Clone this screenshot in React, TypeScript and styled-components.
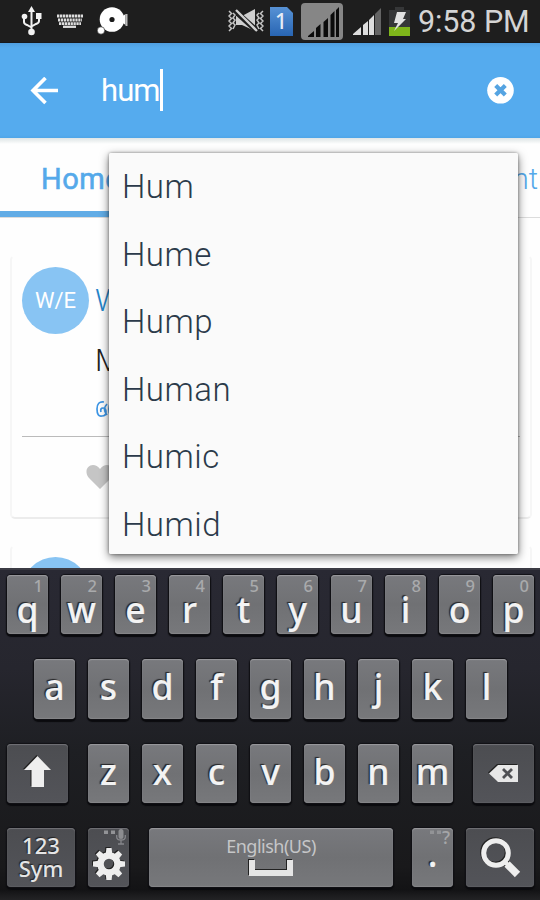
import React from "react";
import styled, { createGlobalStyle, css } from "styled-components";

const GlobalStyle = createGlobalStyle`
  * { box-sizing: border-box; }
  body { margin: 0; background: #fff; overflow: hidden; }
`;

const Screen = styled.div`
  position: relative;
  width: 540px;
  height: 900px;
  overflow: hidden;
  display: flex;
  flex-direction: column;
  background: #fefefe;
  font-family: Roboto, sans-serif;
`;

const StatusBar = styled.header`
  height: 43px;
  flex: none;
  display: flex;
  justify-content: space-between;
  padding: 0 11px 0 20px;
  background: #1e1e1e;
  border-bottom: 1px solid #17191c;
`;

const StatusGroup = styled.div<{ $gap: number }>`
  display: flex;
  align-items: center;
  gap: ${(p) => p.$gap}px;
  svg { flex: none; display: block; }
`;

const Clock = styled.time`
  width: 111px;
  padding-top: 1px;
  font-size: 30.5px;
  line-height: 42px;
  letter-spacing: -0.1px;
  white-space: nowrap;
  color: #d4d4d4;
`;

const SearchBar = styled.div`
  height: 95px;
  flex: none;
  display: flex;
  align-items: center;
  padding: 0 26px 0 30px;
  background: linear-gradient(#4f9fe0 0, #55abee 5px, #55abee 92px, #4fa5e7 95px);
  svg { display: block; flex: none; }
`;

const Query = styled.div`
  flex: 1;
  display: flex;
  align-items: center;
  margin-left: 42px;
  font-size: 31px;
  line-height: 44px;
  letter-spacing: -0.9px;
  color: #fff;
`;

const Caret = styled.span`
  width: 3.5px;
  height: 42px;
  margin-bottom: 1px;
  background: #fff;
`;

const Tabs = styled.nav`
  height: 80px;
  flex: none;
  display: flex;
  justify-content: space-between;
  background: linear-gradient(#dfe5e7 0, #edf1f1 3px, #fefefe 6px);
  border-bottom: 1px solid #dcdcdc;
`;

const Tab = styled.div<{ $active?: boolean }>`
  height: 79px;
  width: 180px;
  padding: 0 0 0 41px;
  font-size: 29px;
  line-height: 82px;
  color: #55a9ea;
  ${(p) =>
    p.$active
      ? css`font-weight: 400; letter-spacing: 0.5px; -webkit-text-stroke: 0.6px #55a9ea; border-bottom: 6px solid #61ace6;`
      : css`font-weight: 300; text-align: right; padding: 0 2px 0 0;`}
`;

const Feed = styled.main`
  height: 350px;
  flex: none;
  overflow: hidden;
  display: flex;
  flex-direction: column;
  gap: 26px;
  padding: 37px 8px 0 10px;
`;

const Card = styled.article`
  height: 264px;
  flex: none;
  padding: 10px 10px 0;
  border: 2px solid #f6f6f6;
  border-top-color: transparent;
  border-bottom-color: #ececec;
  border-radius: 5px;
  display: flex;
  flex-direction: column;
`;

const Entry = styled.div`
  height: 169px;
  flex: none;
  display: flex;
  gap: 7px;
`;

const Avatar = styled.div`
  width: 67px;
  height: 67px;
  flex: none;
  border-radius: 50%;
  background: #88c4f3;
  color: #fff;
  font-size: 22px;
  line-height: 67px;
  text-align: center;
`;

const Lines = styled.div`
  display: flex;
  flex-direction: column;
  font-size: 31px;
  font-weight: 300;
  line-height: 60px;
  padding-top: 4px;
  svg { display: block; margin-top: 9px; }
`;

const Term = styled.span`
  margin-left: -1px;
  color: #2484c9;
`;

const Meaning = styled.span`
  margin-left: -1px;
  color: #222;
`;

const Actions = styled.div`
  height: 80px;
  display: flex;
  align-items: center;
  padding-left: 64px;
  border-top: 1px solid #bbb;
`;

const Suggestions = styled.ul`
  position: absolute;
  left: 109px;
  top: 153px;
  width: 409px;
  height: 401px;
  margin: 0;
  padding: 0;
  list-style: none;
  overflow: hidden;
  border-radius: 2px;
  background: #fafafa;
`;

const SuggestionShadow = styled.div`
  position: absolute;
  left: 109px;
  top: 153px;
  width: 409px;
  height: 401px;
  border-radius: 2px;
  box-shadow: 0 0 3px rgba(0, 0, 0, 0.4), 0 3px 10px rgba(0, 0, 0, 0.55);
`;

const Suggestion = styled.li`
  height: 67.5px;
  padding-left: 13px;
  font-size: 33px;
  font-weight: 300;
  letter-spacing: 0.5px;
  line-height: 67.5px;
  color: #2b3a4a;
`;

const Keyboard = styled.section`
  position: relative;
  height: 332px;
  flex: none;
  display: flex;
  flex-direction: column;
  gap: 25px;
  padding-top: 5px;
  border-top: 2px solid #3b3b44;
  background: linear-gradient(#292933 0, #26262e 30%, #1e1f23 55%, #19191b 90%, #131315 97%, #232325 100%);
  font-family: "Noto Sans", sans-serif;
`;

const KeyRow = styled.div<{ $left: number }>`
  height: 59.25px;
  flex: none;
  display: flex;
  padding-left: ${(p) => p.$left}px;
`;

const Key = styled.div<{ $w?: number; $after?: number; $dark?: boolean }>`
  position: relative;
  width: ${(p) => p.$w ?? 41}px;
  height: 59.25px;
  flex: none;
  margin-right: ${(p) => p.$after ?? 13}px;
  display: flex;
  flex-direction: column;
  align-items: center;
  justify-content: center;
  border-radius: 4px;
  background: ${(p) => (p.$dark ? "linear-gradient(#4c4d51, #535459)" : "linear-gradient(#78797d, #707174 50%, #77787b)")};
  box-shadow: 0 0 1px 1px #111116, 0 2px 1px 1px #0b0b0e,
    inset 0 1px 1px ${(p) => (p.$dark ? "#737377" : "#9a9a9e")},
    inset 0 -1px 1px ${(p) => (p.$dark ? "#5d5e62" : "#858689")};
  color: #f3f3f3;
`;

const Letter = styled.span<{ $drop?: number }>`
  margin-top: ${(p) => p.$drop ?? 0}px;
  font-size: 35.5px;
  font-weight: 500;
  line-height: 24px;
  -webkit-text-stroke: 0.2px #f3f3f3;
  text-shadow: -1.5px -1px 1px #252527;
`;

const Hint = styled.span`
  position: absolute;
  right: 5px;
  top: 3px;
  font-size: 16.5px;
  line-height: 16px;
  font-weight: 500;
  color: #a9aaac;
`;

const Corner = styled.span`
  position: absolute;
  right: 3px;
  top: 1px;
  display: flex;
  font-size: 18px;
  line-height: 16px;
  font-weight: 500;
  color: #a5a6a8;
`;

const ModeLabel = styled.span`
  font-size: 22px;
  line-height: 23px;
  font-weight: 500;
  text-align: center;
  color: #e5e5e5;
  text-shadow: -1px -1px 1px #222;
`;

const Language = styled.span`
  margin-top: -5px;
  font-size: 18px;
  line-height: 27px;
  letter-spacing: -0.5px;
  color: #c5c6c8;
`;

const IconSlot = styled.span<{ $up?: number; $down?: number }>`
  display: block;
  padding: ${(p) => p.$down ?? 0}px 0 ${(p) => p.$up ?? 0}px;
`;

const Raised = styled.svg`
  display: block;
  flex: none;
  overflow: visible;
  filter: drop-shadow(-1px -1px 0.6px #222);
`;

const UsbIcon = () => (
  <svg width="23" height="30" viewBox="0 0 23 30" fill="none" stroke="#f2f2f2" strokeWidth="2">
    <path d="M11.5 5v21M4 11v5q0 2 3 3l4.500 2.500M19 11v4q0 2-3 3l-4.500 2.500" />
    <path d="M11.500 0l3.500 6H8z" fill="#f2f2f2" stroke="none" />
    <circle cx="4.500" cy="10.500" r="2.800" fill="#f2f2f2" stroke="none" />
    <path d="M16 7h5.500v6H16z" fill="#f2f2f2" stroke="none" />
    <circle cx="11.500" cy="26" r="3.300" fill="#f2f2f2" stroke="none" />
  </svg>
);

const KeyboardIcon = () => (
  <svg width="26" height="14" viewBox="0 0 26 14" fill="none" stroke="#dedede">
    <path d="M0 2h26" strokeWidth="3" strokeDasharray="2.4 .6" />
    <path d="M1 6h24" strokeWidth="3" strokeDasharray="2.2 .7" />
    <path d="M2 9.700h22" strokeWidth="2.700" strokeDasharray="2.300 .6" />
    <path d="M6 12.800h13" strokeWidth="2.300" />
  </svg>
);

const DiscIcon = () => (
  <svg width="33" height="28" viewBox="0 0 33 28" fill="#fff">
    <circle cx="15" cy="12.500" r="12.300" />
    <circle cx="15" cy="12.500" r="2.600" fill="#1b1b1b" />
    <circle cx="4" cy="23.500" r="3.700" stroke="#1e1e1e" strokeWidth=".6" />
    <path d="M26 9l2.500-2v11L26 16z" />
    <path d="M29.500 7v12" stroke="#bbb" strokeWidth="2" />
  </svg>
);

const MuteIcon = () => (
  <svg width="36" height="24" viewBox="0 0 36 24" fill="none">
    <path d="M8 7h6l13-7v22l-13-6H8z" fill="#cfcfcf" />
    <path d="M7 2l22 20" stroke="#1e1e1e" strokeWidth="5.500" />
    <path d="M8 1l21 21" stroke="#d0d0d0" strokeWidth="2.300" />
    <path d="M1 2l2.500 2.500L1 7l2.500 2.500L1 12l2.500 2.500L1 17l2.500 2.500L1 22M5 4l2 2-2 3 2 2-2 3 2 2-2 4M35 2l-2.500 2.500L35 7l-2.500 2.500L35 12l-2.500 2.500L35 17l-2.500 2.500L35 22M31 4l-2 2 2 3-2 2 2 3-2 2 2 4" stroke="#c5c5c5" strokeWidth="1.500" />
  </svg>
);

const SimIcon = () => (
  <svg width="23" height="29" viewBox="0 0 23 29">
    <defs>
      <linearGradient id="sim" x1="0" y1="0" x2="0" y2="1">
        <stop stopColor="#5792d5" />
        <stop offset="1" stopColor="#2865b3" />
      </linearGradient>
    </defs>
    <path d="M0 0h17l6 6v23H0z" fill="url(#sim)" />
    <text x="11" y="22" textAnchor="middle" fontFamily="Noto Sans" fontWeight="500" fontSize="21" fill="#e6edf6">1</text>
  </svg>
);

const RoamingSignal = () => (
  <svg width="42" height="37" viewBox="0 0 42 37">
    <rect width="42" height="37" rx="4" fill="#868686" />
    <path d="M7 34v-1l6-5v6zM15 34v-9l4.500-4v13zM22.500 34V19l4.500-4v19zM29.500 34V12l4-4v26zM35 34V7l3-3v30z" fill="#0b0b0b" />
  </svg>
);

const SignalIcon = () => (
  <svg width="28" height="27" viewBox="0 0 28 27" fill="#ddd">
    <path d="M0 27v-1l8-7v8zM10 27V17l5-4v14zM16 27V12l5-5v20z" />
    <path d="M22 27V6l6-6v27z" fill="#646464" />
  </svg>
);

const BatteryIcon = () => (
  <svg width="21" height="29" viewBox="0 0 21 29">
    <path d="M0 3h6V0h9v3h6v26H0z" fill="#363738" />
    <path d="M0 20h21v9H0z" fill="#7eb51a" />
    <path d="M8 5h9l-3 7h3L5 24l4-8H5z" fill="#e3e3e3" />
  </svg>
);

const BackIcon = () => (
  <svg width="29" height="28" viewBox="0 0 29 28" fill="none" stroke="#fff" strokeWidth="3.600">
    <path d="M28 13.500H3M15.500 1L3 13.500 15.500 26" />
  </svg>
);

const ClearIcon = () => (
  <svg width="27" height="28" viewBox="0 0 27 28">
    <circle cx="13.500" cy="13.300" r="13.300" fill="#fff" />
    <path d="M8.700 8.500l9.600 9.600M18.300 8.500l-9.600 9.600" stroke="#55a4e2" strokeWidth="4.200" />
  </svg>
);

const ScriptMark = () => (
  <svg width="22" height="18" viewBox="0 0 22 18" fill="none" stroke="#3b94e4" strokeWidth="1.700">
    <path d="M8 2Q1 1 1 9t5 7q4 0 4-4t-3-4-2 4M11 4Q6 9 11 15M20 3q-7-2-7 6t5 6 3-5-4-1" />
  </svg>
);

const HeartIcon = () => (
  <svg width="28" height="24" viewBox="0 0 28 24" fill="#c5c5c5">
    <path d="M14 24L3 13C-2 7 1 0 7 0q4 0 7 4 3-4 7-4c6 0 9 7 4 13z" />
  </svg>
);

const ShiftIcon = () => (
  <Raised width="27" height="31" viewBox="0 0 27 31" fill="#eee">
    <path d="M13.500 0L27 14h-7v17H7.500V14H0z" />
  </Raised>
);

const DeleteIcon = () => (
  <Raised width="29" height="17" viewBox="0 0 29 17">
    <path d="M0 8.500L9 0h20v17H9z" fill="#e7e7e7" />
    <path d="M14 4l9 9M23 4l-9 9" stroke="#505155" strokeWidth="2.800" />
  </Raised>
);

const SettingsIcon = () => (
  <Raised width="32" height="32" viewBox="-16 -16 32 32">
    <circle r="8.500" fill="none" stroke="#eee" strokeWidth="6.500" />
    {[0, 45, 90, 135, 180, 225, 270, 315].map((angle) => (
      <path key={angle} d="M-3.300-10l.7-6h5.200l.7 6z" fill="#eee" transform={`rotate(${angle})`} />
    ))}
  </Raised>
);

const MicIcon = () => (
  <svg width="10" height="16" viewBox="0 0 10 16">
    <rect x="2.500" width="5" height="10" rx="2.500" fill="#8c8d90" />
    <path d="M.7 6v2q0 3 4.300 3t4.300-3V6M5 11v4M2 15h6" fill="none" stroke="#85868a" strokeWidth="1.300" />
  </svg>
);

const DotsIcon = () => (
  <svg width="12" height="6" viewBox="0 0 12 6" fill="#929396">
    <rect y="1.500" width="4" height="3.500" /><rect x="7" y="1.500" width="4" height="3.500" />
  </svg>
);

const SpaceIcon = () => (
  <Raised width="44" height="16" viewBox="0 0 44 16" fill="#e5e5e5">
    <path d="M0 0h6v10h32V0h6v16H0z" />
  </Raised>
);

const SearchIcon = () => (
  <Raised width="39" height="39" viewBox="0 0 39 39" fill="none" stroke="#eee">
    <circle cx="15" cy="15" r="12.300" strokeWidth="5" />
    <path d="M23.500 23.500l3 3" strokeWidth="4" />
    <path d="M26 26l10.500 10.500" strokeWidth="7.500" />
  </Raised>
);

const words = ["Hum", "Hume", "Hump", "Human", "Humic", "Humid"];
const topRow = [..."qwertyuiop"];

export default function App() {
  return (
    <>
      <GlobalStyle />
      <Screen>
        <StatusBar>
          <StatusGroup $gap={14}>
            <UsbIcon />
            <KeyboardIcon />
            <DiscIcon />
          </StatusGroup>
          <StatusGroup $gap={8}>
            <StatusGroup $gap={6}><MuteIcon /><SimIcon /></StatusGroup>
            <StatusGroup $gap={10}><RoamingSignal /><SignalIcon /></StatusGroup>
            <BatteryIcon />
            <Clock>9:58 PM</Clock>
          </StatusGroup>
        </StatusBar>
        <SearchBar>
          <BackIcon />
          <Query>hum<Caret /></Query>
          <ClearIcon />
        </SearchBar>
        <Tabs>
          <Tab $active>Home</Tab>
          <Tab>nt</Tab>
        </Tabs>
        <Feed>
          <Card>
            <Entry>
              <Avatar>W/E</Avatar>
              <Lines>
                <Term>W</Term>
                <Meaning>M</Meaning>
                <ScriptMark />
              </Lines>
            </Entry>
            <Actions><HeartIcon /></Actions>
          </Card>
          <Card>
            <Entry><Avatar /></Entry>
          </Card>
        </Feed>
        <SuggestionShadow />
        <Suggestions>
          {words.map((word) => <Suggestion key={word}>{word}</Suggestion>)}
        </Suggestions>
        <Keyboard>
          <KeyRow $left={7}>
            {topRow.map((letter, i) => (
              <Key key={letter}>
                <Hint>{(i + 1) % 10}</Hint>
                <Letter $drop={8}>{letter}</Letter>
              </Key>
            ))}
          </KeyRow>
          <KeyRow $left={34}>
            {[..."asdfghjkl"].map((letter) => (
              <Key key={letter}><Letter $drop={-5}>{letter}</Letter></Key>
            ))}
          </KeyRow>
          <KeyRow $left={7}>
            <Key $w={61} $after={20} $dark><IconSlot $up={3}><ShiftIcon /></IconSlot></Key>
            {[..."zxcvbnm"].map((letter) => (
              <Key key={letter} $after={letter === "m" ? 20 : 13}><Letter $drop={-5}>{letter}</Letter></Key>
            ))}
            <Key $w={61} $dark><DeleteIcon /></Key>
          </KeyRow>
          <KeyRow $left={7}>
            <Key $w={68} $dark><ModeLabel>123<br />Sym</ModeLabel></Key>
            <Key $after={20} $dark>
              <Corner><DotsIcon /><MicIcon /></Corner>
              <IconSlot $down={13}><SettingsIcon /></IconSlot>
            </Key>
            <Key $w={244} $after={19}>
              <Language>English(US)</Language>
              <SpaceIcon />
            </Key>
            <Key>
              <Corner><DotsIcon />?</Corner>
              <Letter $drop={-8}>.</Letter>
            </Key>
            <Key $w={68} $dark><SearchIcon /></Key>
          </KeyRow>
        </Keyboard>
      </Screen>
    </>
  );
}
